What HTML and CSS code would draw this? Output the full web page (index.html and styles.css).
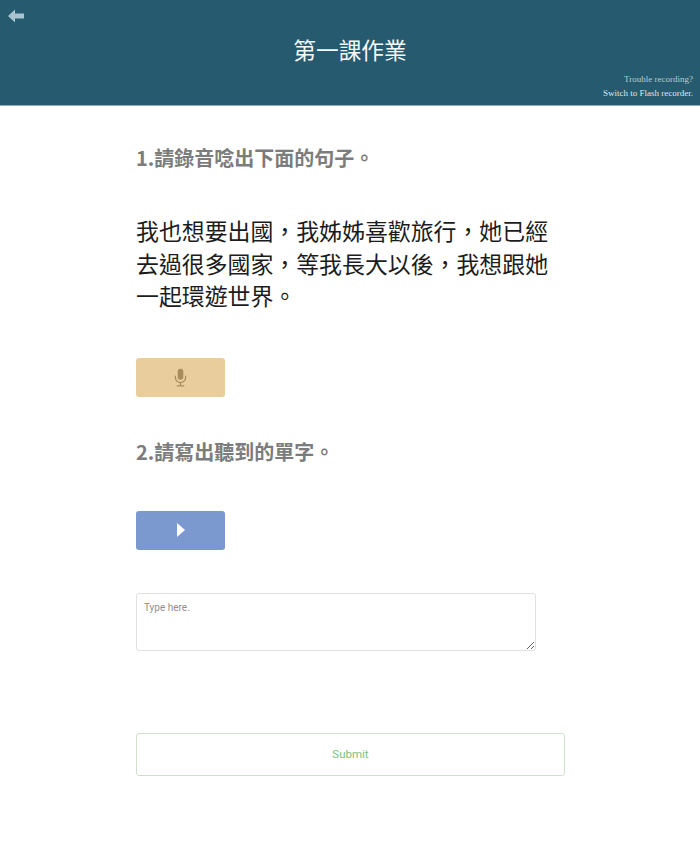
FILE: index.html
```html
<!DOCTYPE html>
<html lang="zh-Hant">
<head>
  <meta charset="UTF-8">
  <title>第一課作業</title>
  <link rel="stylesheet" href="styles.css">
</head>
<body>
  <header class="topbar">
    <a class="back" href="#" aria-label="Back">
      <svg viewBox="0 0 16 14" width="16" height="14">
        <path d="M0 7 L7 0.5 L7 4.5 L16 4.5 L16 9.5 L7 9.5 L7 13.5 Z" fill="#a9c4d0"/>
      </svg>
    </a>
    <h1 class="page-title">第一課作業</h1>
    <div class="recorder-help">
      <div class="help-muted">Trouble recording?</div>
      <div>Switch to Flash recorder.</div>
    </div>
  </header>

  <main class="content">
    <h2 class="question q-first">1.請錄音唸出下面的句子。</h2>
    <p class="sentence">我也想要出國，我姊姊喜歡旅行，她已經去過很多國家，等我長大以後，我想跟她一起環遊世界。</p>
    <button class="action record" aria-label="Record">
      <svg viewBox="0 0 14 20" width="13" height="19">
        <rect x="4" y="0.5" width="6" height="12" rx="3" fill="#a98c5d"/>
        <path d="M1.5 8 V10 A5.5 5.5 0 0 0 12.5 10 V8 M7 15.5 V18.5 M3 19 H11" fill="none" stroke="#a98c5d" stroke-width="1.3"/>
      </svg>
    </button>

    <h2 class="question q-second">2.請寫出聽到的單字。</h2>
    <button class="action play" aria-label="Play">
      <svg viewBox="0 0 8 14" width="8" height="14">
        <path d="M0 0 L8 7 L0 14 Z" fill="#ffffff"/>
      </svg>
    </button>

    <textarea class="answer" placeholder="Type here."></textarea>
    <button class="submit">Submit</button>
  </main>
</body>
</html>
```

FILE: styles.css
```css
* {
  margin: 0;
  padding: 0;
  box-sizing: border-box;
}

body {
  background: #fff;
  font-family: Roboto, "Noto Sans CJK TC", sans-serif;
}

.topbar {
  position: relative;
  height: 106px;
  background: #265a6e;
  border-bottom: 1px solid #8fb0ba;
  color: #fff;
}

.back {
  position: absolute;
  top: 9px;
  left: 8px;
  display: block;
  line-height: 0;
}

.page-title {
  padding-top: 34px;
  text-align: center;
  font-family: "Noto Sans CJK TC", sans-serif;
  font-size: 22.7px;
  line-height: 32px;
  font-weight: 400;
  color: #f4f8f9;
}

.recorder-help {
  position: absolute;
  right: 7px;
  bottom: 5px;
  text-align: right;
  font-family: "Liberation Serif", serif;
  font-size: 9px;
  line-height: 13.5px;
  color: #dfe9ec;
}

.help-muted {
  color: #b5cdd4;
}

.content {
  padding: 0 0 0 136px;
}

.question {
  font-family: "Noto Sans CJK TC", Roboto, sans-serif;
  font-size: 20px;
  line-height: 28px;
  font-weight: 700;
  color: #7c7c7c;
}

.q-first {
  padding-top: 38px;
}

.q-second {
  margin-top: 41px;
}

.sentence {
  width: 420px;
  margin-top: 42px;
  font-family: "Noto Sans CJK TC", sans-serif;
  font-size: 22.9px;
  line-height: 32.5px;
  color: #1c1c1c;
}

.action {
  display: flex;
  align-items: center;
  justify-content: center;
  width: 89px;
  height: 39px;
  border: none;
  border-radius: 3px;
}

.record {
  margin-top: 46px;
  background: #e9cd9c;
}

.play {
  margin-top: 45px;
  background: #7b98cf;
}

.answer {
  display: block;
  width: 400px;
  height: 58px;
  margin-top: 43px;
  padding: 8px 7px;
  border: 1px solid #dfe2df;
  border-radius: 3px;
  font-family: Roboto, sans-serif;
  font-size: 10px;
  outline: none;
}

.answer::placeholder {
  color: #8f8f8f;
  opacity: 1;
}

.submit {
  display: block;
  width: 429px;
  height: 43px;
  margin-top: 82px;
  background: #fff;
  border: 1px solid #cfe0cf;
  border-radius: 3px;
  font-family: Roboto, sans-serif;
  font-size: 11.5px;
  color: #7cc07c;
}
```
